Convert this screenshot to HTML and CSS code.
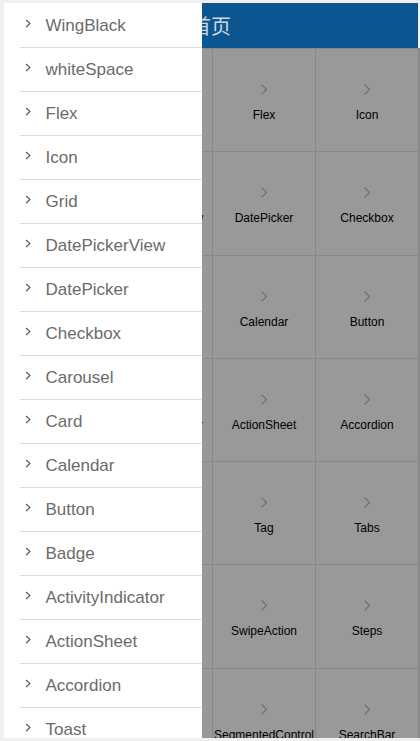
FILE: index.html
```html
<!DOCTYPE html>
<html lang="zh">
<head>
<meta charset="utf-8">
<title>首页</title>
<link rel="stylesheet" href="styles.css">
</head>
<body>
<div class="frame">
  <header class="topbar"><span class="title">首页</span></header>
  <main class="content">
    <div class="grid">
      <div class="cell"><svg class="cell-arrow" viewBox="0 0 8 11"><path d="M1.5 0.5 L6.5 5.5 L1.5 10.5"/></svg><span class="cell-text">WingBlack</span></div>
      <div class="cell"><svg class="cell-arrow" viewBox="0 0 8 11"><path d="M1.5 0.5 L6.5 5.5 L1.5 10.5"/></svg><span class="cell-text">whiteSpace</span></div>
      <div class="cell"><svg class="cell-arrow" viewBox="0 0 8 11"><path d="M1.5 0.5 L6.5 5.5 L1.5 10.5"/></svg><span class="cell-text">Flex</span></div>
      <div class="cell"><svg class="cell-arrow" viewBox="0 0 8 11"><path d="M1.5 0.5 L6.5 5.5 L1.5 10.5"/></svg><span class="cell-text">Icon</span></div>
      <div class="cell"><svg class="cell-arrow" viewBox="0 0 8 11"><path d="M1.5 0.5 L6.5 5.5 L1.5 10.5"/></svg><span class="cell-text">Grid</span></div>
      <div class="cell"><svg class="cell-arrow" viewBox="0 0 8 11"><path d="M1.5 0.5 L6.5 5.5 L1.5 10.5"/></svg><span class="cell-text">DatePickerView</span></div>
      <div class="cell"><svg class="cell-arrow" viewBox="0 0 8 11"><path d="M1.5 0.5 L6.5 5.5 L1.5 10.5"/></svg><span class="cell-text">DatePicker</span></div>
      <div class="cell"><svg class="cell-arrow" viewBox="0 0 8 11"><path d="M1.5 0.5 L6.5 5.5 L1.5 10.5"/></svg><span class="cell-text">Checkbox</span></div>
      <div class="cell"><svg class="cell-arrow" viewBox="0 0 8 11"><path d="M1.5 0.5 L6.5 5.5 L1.5 10.5"/></svg><span class="cell-text">Carousel</span></div>
      <div class="cell"><svg class="cell-arrow" viewBox="0 0 8 11"><path d="M1.5 0.5 L6.5 5.5 L1.5 10.5"/></svg><span class="cell-text">Card</span></div>
      <div class="cell"><svg class="cell-arrow" viewBox="0 0 8 11"><path d="M1.5 0.5 L6.5 5.5 L1.5 10.5"/></svg><span class="cell-text">Calendar</span></div>
      <div class="cell"><svg class="cell-arrow" viewBox="0 0 8 11"><path d="M1.5 0.5 L6.5 5.5 L1.5 10.5"/></svg><span class="cell-text">Button</span></div>
      <div class="cell"><svg class="cell-arrow" viewBox="0 0 8 11"><path d="M1.5 0.5 L6.5 5.5 L1.5 10.5"/></svg><span class="cell-text">Badge</span></div>
      <div class="cell"><svg class="cell-arrow" viewBox="0 0 8 11"><path d="M1.5 0.5 L6.5 5.5 L1.5 10.5"/></svg><span class="cell-text">ActivityIndicator</span></div>
      <div class="cell"><svg class="cell-arrow" viewBox="0 0 8 11"><path d="M1.5 0.5 L6.5 5.5 L1.5 10.5"/></svg><span class="cell-text">ActionSheet</span></div>
      <div class="cell"><svg class="cell-arrow" viewBox="0 0 8 11"><path d="M1.5 0.5 L6.5 5.5 L1.5 10.5"/></svg><span class="cell-text">Accordion</span></div>
      <div class="cell"><svg class="cell-arrow" viewBox="0 0 8 11"><path d="M1.5 0.5 L6.5 5.5 L1.5 10.5"/></svg><span class="cell-text">Toast</span></div>
      <div class="cell"><svg class="cell-arrow" viewBox="0 0 8 11"><path d="M1.5 0.5 L6.5 5.5 L1.5 10.5"/></svg><span class="cell-text">TextareaItem</span></div>
      <div class="cell"><svg class="cell-arrow" viewBox="0 0 8 11"><path d="M1.5 0.5 L6.5 5.5 L1.5 10.5"/></svg><span class="cell-text">Tag</span></div>
      <div class="cell"><svg class="cell-arrow" viewBox="0 0 8 11"><path d="M1.5 0.5 L6.5 5.5 L1.5 10.5"/></svg><span class="cell-text">Tabs</span></div>
      <div class="cell"><svg class="cell-arrow" viewBox="0 0 8 11"><path d="M1.5 0.5 L6.5 5.5 L1.5 10.5"/></svg><span class="cell-text">TabBar</span></div>
      <div class="cell"><svg class="cell-arrow" viewBox="0 0 8 11"><path d="M1.5 0.5 L6.5 5.5 L1.5 10.5"/></svg><span class="cell-text">Switch</span></div>
      <div class="cell"><svg class="cell-arrow" viewBox="0 0 8 11"><path d="M1.5 0.5 L6.5 5.5 L1.5 10.5"/></svg><span class="cell-text">SwipeAction</span></div>
      <div class="cell"><svg class="cell-arrow" viewBox="0 0 8 11"><path d="M1.5 0.5 L6.5 5.5 L1.5 10.5"/></svg><span class="cell-text">Steps</span></div>
      <div class="cell"><svg class="cell-arrow" viewBox="0 0 8 11"><path d="M1.5 0.5 L6.5 5.5 L1.5 10.5"/></svg><span class="cell-text">Stepper</span></div>
      <div class="cell"><svg class="cell-arrow" viewBox="0 0 8 11"><path d="M1.5 0.5 L6.5 5.5 L1.5 10.5"/></svg><span class="cell-text">Slider</span></div>
      <div class="cell"><svg class="cell-arrow" viewBox="0 0 8 11"><path d="M1.5 0.5 L6.5 5.5 L1.5 10.5"/></svg><span class="cell-text">SegmentedControl</span></div>
      <div class="cell"><svg class="cell-arrow" viewBox="0 0 8 11"><path d="M1.5 0.5 L6.5 5.5 L1.5 10.5"/></svg><span class="cell-text">SearchBar</span></div>
    </div>
    <div class="mask"></div>
  </main>
  <aside class="drawer">
    <ul class="menu">
      <li class="menu-item"><svg class="menu-arrow" viewBox="0 0 6 9"><path d="M1 1 L5 4.5 L1 8"/></svg><span>WingBlack</span></li>
      <li class="menu-item"><svg class="menu-arrow" viewBox="0 0 6 9"><path d="M1 1 L5 4.5 L1 8"/></svg><span>whiteSpace</span></li>
      <li class="menu-item"><svg class="menu-arrow" viewBox="0 0 6 9"><path d="M1 1 L5 4.5 L1 8"/></svg><span>Flex</span></li>
      <li class="menu-item"><svg class="menu-arrow" viewBox="0 0 6 9"><path d="M1 1 L5 4.5 L1 8"/></svg><span>Icon</span></li>
      <li class="menu-item"><svg class="menu-arrow" viewBox="0 0 6 9"><path d="M1 1 L5 4.5 L1 8"/></svg><span>Grid</span></li>
      <li class="menu-item"><svg class="menu-arrow" viewBox="0 0 6 9"><path d="M1 1 L5 4.5 L1 8"/></svg><span>DatePickerView</span></li>
      <li class="menu-item"><svg class="menu-arrow" viewBox="0 0 6 9"><path d="M1 1 L5 4.5 L1 8"/></svg><span>DatePicker</span></li>
      <li class="menu-item"><svg class="menu-arrow" viewBox="0 0 6 9"><path d="M1 1 L5 4.5 L1 8"/></svg><span>Checkbox</span></li>
      <li class="menu-item"><svg class="menu-arrow" viewBox="0 0 6 9"><path d="M1 1 L5 4.5 L1 8"/></svg><span>Carousel</span></li>
      <li class="menu-item"><svg class="menu-arrow" viewBox="0 0 6 9"><path d="M1 1 L5 4.5 L1 8"/></svg><span>Card</span></li>
      <li class="menu-item"><svg class="menu-arrow" viewBox="0 0 6 9"><path d="M1 1 L5 4.5 L1 8"/></svg><span>Calendar</span></li>
      <li class="menu-item"><svg class="menu-arrow" viewBox="0 0 6 9"><path d="M1 1 L5 4.5 L1 8"/></svg><span>Button</span></li>
      <li class="menu-item"><svg class="menu-arrow" viewBox="0 0 6 9"><path d="M1 1 L5 4.5 L1 8"/></svg><span>Badge</span></li>
      <li class="menu-item"><svg class="menu-arrow" viewBox="0 0 6 9"><path d="M1 1 L5 4.5 L1 8"/></svg><span>ActivityIndicator</span></li>
      <li class="menu-item"><svg class="menu-arrow" viewBox="0 0 6 9"><path d="M1 1 L5 4.5 L1 8"/></svg><span>ActionSheet</span></li>
      <li class="menu-item"><svg class="menu-arrow" viewBox="0 0 6 9"><path d="M1 1 L5 4.5 L1 8"/></svg><span>Accordion</span></li>
      <li class="menu-item"><svg class="menu-arrow" viewBox="0 0 6 9"><path d="M1 1 L5 4.5 L1 8"/></svg><span>Toast</span></li>
    </ul>
  </aside>
</div>
</body>
</html>
```
FILE: styles.css
```css
html, body {
  margin: 0;
  padding: 0;
}

body {
  width: 420px;
  height: 741px;
  overflow: hidden;
  background: #efefef;
  font-family: "Liberation Sans", Arial, sans-serif;
}

.frame {
  position: relative;
  margin: 3px 0 0 4px;
  width: 416px;
  height: 735px;
  overflow: hidden;
  display: flex;
  flex-direction: column;
}

.topbar {
  flex: none;
  height: 45px;
  margin-right: 2px;
  background: #0b5690;
  display: flex;
  align-items: center;
  justify-content: center;
}

.title {
  font-family: "Noto Sans CJK SC", sans-serif;
  font-size: 20px;
  line-height: 1;
  color: #cfd6dd;
}

.content {
  position: relative;
  flex: 1;
  background: #e6e6e6;
  padding-left: 2px;
  overflow: hidden;
}

.grid {
  display: grid;
  grid-template-columns: repeat(4, 103px);
  grid-auto-rows: 103.25px;
  width: 412px;
  border-right: 1px solid #e3e3e3;
  background: #fff;
}

.cell {
  box-sizing: border-box;
  border-left: 1px solid #e3e3e3;
  border-top: 1px solid #e3e3e3;
  display: flex;
  flex-direction: column;
  align-items: center;
  padding-top: 35px;
  background: #fff;
}

.cell-arrow {
  width: 8px;
  height: 11px;
  fill: none;
  stroke: #bbb;
  stroke-width: 1.2;
  margin-bottom: 12px;
}

.cell-text {
  font-size: 12px;
  line-height: 16px;
  color: #000;
  white-space: nowrap;
}

.mask {
  position: absolute;
  inset: 0;
  background: rgba(0, 0, 0, 0.4);
}

.drawer {
  position: absolute;
  left: 0;
  top: 0;
  bottom: 0;
  width: 198px;
  box-sizing: border-box;
  padding-top: 1px;
  background: #fff;
  z-index: 2;
  overflow: hidden;
}

.menu {
  list-style: none;
  margin: 0 0 0 16px;
  padding: 0;
}

.menu-item {
  box-sizing: border-box;
  height: 44px;
  border-bottom: 1px solid #ddd;
  display: flex;
  align-items: center;
  padding-left: 5px;
  font-size: 17px;
  color: #6b6b6b;
  white-space: nowrap;
}

.menu-arrow {
  flex: none;
  width: 6px;
  height: 9px;
  fill: none;
  stroke: #555;
  stroke-width: 1.1;
  margin-right: 14.5px;
  margin-bottom: 5px;
}
```
